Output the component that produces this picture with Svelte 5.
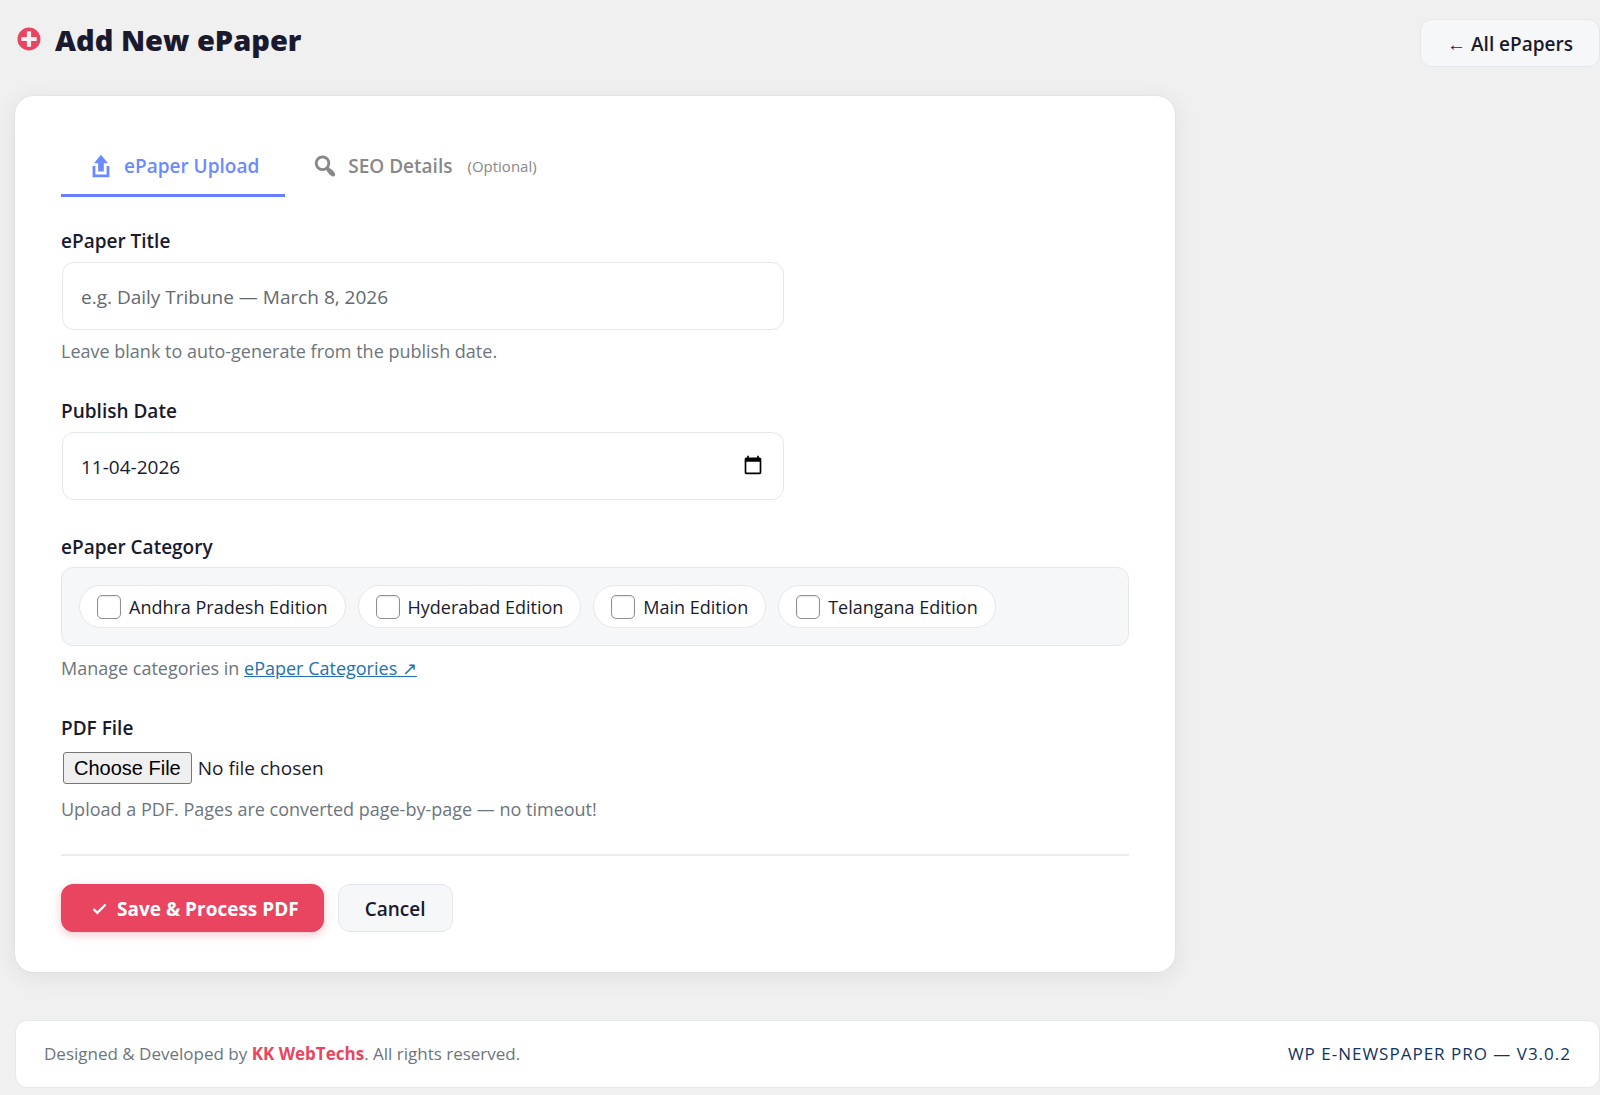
<script lang="ts">
  let activeTab = 'upload';
  let title = '';
  let publishDate = '11-04-2026';

  let categories = [
    { id: 'andhra', name: 'Andhra Pradesh Edition', checked: false },
    { id: 'hyderabad', name: 'Hyderabad Edition', checked: false },
    { id: 'main', name: 'Main Edition', checked: false },
    { id: 'telangana', name: 'Telangana Edition', checked: false }
  ];

  function reset(): void {
    title = '';
    categories = categories.map(c => ({ ...c, checked: false }));
  }
</script>

<div class="page">
  <header class="page-header">
    <h1>
      <svg class="icon brand" viewBox="0 0 20 20" aria-hidden="true">
        <path d="M15.8 4.2c3.2 3.21 3.2 8.39 0 11.6-3.21 3.2-8.39 3.2-11.6 0C1 12.59 1 7.41 4.2 4.2 7.41 1 12.59 1 15.8 4.2zm-4.3 11.3v-4h4v-3h-4v-4h-3v4h-4v3h4v4h3z" />
      </svg>
      Add New ePaper
    </h1>
    <a class="btn" href="#all">← All ePapers</a>
  </header>

  <main class="card">
    <div class="tabs" role="tablist">
      <button
        type="button"
        role="tab"
        class="tab"
        class:active={activeTab === 'upload'}
        aria-selected={activeTab === 'upload'}
        on:click={() => (activeTab = 'upload')}
      >
        <svg class="icon" viewBox="0 0 20 20" aria-hidden="true">
          <path d="M8 14V8H5l5-6 5 6h-3v6H8zm-2 2v-6H4v8h12.01v-8H14v6H6z" />
        </svg>
        ePaper Upload
      </button>
      <button
        type="button"
        role="tab"
        class="tab"
        class:active={activeTab === 'seo'}
        aria-selected={activeTab === 'seo'}
        on:click={() => (activeTab = 'seo')}
      >
        <svg class="icon" viewBox="0 0 20 20" aria-hidden="true">
          <path d="M12.14 4.18c1.87 1.87 2.11 4.75.72 6.89.12.1.22.21.36.31.2.16.47.36.81.59.34.24.56.39.66.47.42.31.73.57.94.78.32.32.6.65.84 1 .25.35.44.69.59 1.04.14.35.21.68.18 1-.02.32-.14.59-.36.81s-.49.34-.81.36c-.31.02-.65-.04-.99-.19-.35-.14-.7-.34-1.04-.59-.35-.24-.68-.52-1-.84-.21-.21-.47-.52-.77-.93-.1-.13-.25-.35-.47-.66-.22-.32-.4-.57-.56-.78-.16-.2-.29-.35-.44-.5-2.07 1.09-4.69.76-6.44-.98-2.14-2.15-2.14-5.64 0-7.78 2.15-2.15 5.63-2.15 7.78 0zm-1.41 6.36c1.36-1.37 1.36-3.58 0-4.95-1.37-1.37-3.59-1.37-4.95 0-1.37 1.37-1.37 3.58 0 4.95 1.36 1.37 3.58 1.37 4.95 0z" />
        </svg>
        SEO Details
        <span class="optional">(Optional)</span>
      </button>
    </div>

    <form on:submit|preventDefault>
      <div class="field">
        <label class="label" for="title">ePaper Title</label>
        <div class="control">
          <input id="title" type="text" placeholder="e.g. Daily Tribune — March 8, 2026" bind:value={title} />
        </div>
        <p class="help">Leave blank to auto-generate from the publish date.</p>
      </div>

      <div class="field">
        <label class="label" for="date">Publish Date</label>
        <div class="control">
          <input id="date" type="text" inputmode="numeric" bind:value={publishDate} />
          <button type="button" class="picker" aria-label="Show date picker">
            <svg viewBox="0 0 24 24" aria-hidden="true">
              <path d="M20 3h-1V1h-2v2H7V1H5v2H4c-1.1 0-2 .9-2 2v16c0 1.1.9 2 2 2h16c1.1 0 2-.9 2-2V5c0-1.1-.9-2-2-2zm0 18H4V8h16v13z" />
            </svg>
          </button>
        </div>
      </div>

      <fieldset class="field">
        <legend class="label">ePaper Category</legend>
        <div class="categories">
          {#each categories as category}
            <label class="pill">
              <input type="checkbox" name={category.id} bind:checked={category.checked} />
              {category.name}
            </label>
          {/each}
        </div>
        <p class="help">Manage categories in <a href="#categories">ePaper Categories ↗</a></p>
      </fieldset>

      <div class="field file">
        <label class="label" for="pdf">PDF File</label>
        <input id="pdf" type="file" accept="application/pdf" />
        <p class="help">Upload a PDF. Pages are converted page-by-page — no timeout!</p>
      </div>

      <div class="actions">
        <button type="submit" class="btn primary">
          <svg class="check" viewBox="0 0 20 20" aria-hidden="true">
            <path d="M15.3 5.3l-6.8 6.8-2.8-2.8-1.4 1.4 4.2 4.2 8.2-8.2" />
          </svg>
          Save &amp; Process PDF
        </button>
        <button type="button" class="btn" on:click={reset}>Cancel</button>
      </div>
    </form>
  </main>

  <footer>
    <p>Designed &amp; Developed by <a href="#kk">KK WebTechs</a>. All rights reserved.</p>
    <span class="version">WP E-Newspaper Pro — v3.0.2</span>
  </footer>
</div>

<style>
  :global(body) {
    background: #f0f0f0;
  }

  .page {
    padding: 19px 0 8px 15px;
    font-family: "Segoe UI", "Open Sans", "Noto Sans", sans-serif;
    font-size: 18px;
    line-height: 24px;
    color: #1a1a2e;
  }

  .page *,
  .page *::before {
    box-sizing: border-box;
  }

  .page-header {
    display: flex;
    align-items: center;
    justify-content: space-between;
    margin-bottom: 29px;
  }

  h1 {
    display: flex;
    align-items: center;
    gap: 12px;
    margin: 0;
    padding-bottom: 6px;
    font-size: 29px;
    line-height: 36px;
    font-weight: 800;
  }

  .icon {
    flex: none;
    width: 28px;
    height: 28px;
    fill: currentColor;
  }

  .brand {
    margin-bottom: 2px;
    color: #e94560;
  }

  .btn {
    display: inline-flex;
    align-items: center;
    height: 48px;
    padding: 2px 26px 0;
    border: 1px solid #e4e7eb;
    border-radius: 12px;
    background: #f6f7f9;
    color: #1a1a2e;
    font-family: inherit;
    font-size: 19px;
    font-weight: 600;
    text-decoration: none;
    cursor: pointer;
  }

  .primary {
    gap: 7px;
    padding-right: 24px;
    border-color: #e94560;
    background: #e94560;
    color: #fff;
    font-weight: 700;
    box-shadow: 0 3px 10px rgba(233, 69, 96, 0.3);
  }

  .check {
    width: 22px;
    height: 22px;
    fill: currentColor;
  }

  .card {
    max-width: 1160px;
    padding: 42px 46px 40px;
    border-radius: 18px;
    background: #fff;
    box-shadow: 0 0 1px rgba(0, 0, 0, 0.2), 0 4px 24px rgba(0, 0, 0, 0.08);
  }

  .tabs {
    display: flex;
    margin-bottom: 32px;
  }

  .tab {
    display: flex;
    align-items: center;
    gap: 9px;
    height: 59px;
    padding: 0 26px;
    border: 0;
    border-bottom: 3px solid transparent;
    background: none;
    color: #888;
    font-family: inherit;
    font-size: 19px;
    font-weight: 600;
    cursor: pointer;
  }

  .tab.active {
    border-color: #667eff;
    color: #6b8aff;
  }

  .optional {
    margin-left: 6px;
    font-size: 15px;
    font-weight: 400;
  }

  .field {
    margin: 0 0 35px;
    padding: 0;
    border: 0;
  }

  .field.file {
    margin-bottom: 32px;
  }

  .label {
    display: block;
    padding: 0;
    margin-bottom: 8px;
    font-size: 19px;
    font-weight: 600;
  }

  .control {
    position: relative;
    max-width: 724px;
    padding: 1px 1px 0;
  }

  input[type='text'] {
    display: block;
    width: 100%;
    height: 68px;
    padding: 1px 18px 0;
    border: 1px solid #e4e7eb;
    border-radius: 12px;
    background: #fff;
    color: #1a1a2e;
    font-family: inherit;
    font-size: 19px;
  }

  input::placeholder {
    color: #646970;
    opacity: 1;
  }

  .picker {
    position: absolute;
    top: 24px;
    right: 22px;
    width: 20px;
    height: 20px;
    padding: 0;
    border: 0;
    background: none;
    cursor: pointer;
  }

  .picker svg {
    display: block;
  }

  .help {
    margin: 8px 0 0;
    font-size: 18px;
    line-height: 26px;
    color: #6c757d;
  }

  .help a {
    color: #2271b1;
  }

  .categories {
    display: flex;
    flex-wrap: wrap;
    gap: 12px;
    margin-bottom: 9px;
    padding: 17px;
    border: 1px solid #e4e7eb;
    border-radius: 12px;
    background: #f6f7f9;
  }

  .pill {
    display: flex;
    align-items: center;
    gap: 8px;
    height: 43px;
    padding: 0 17px;
    border: 1px solid #e4e7eb;
    border-radius: 22px;
    background: #fff;
    font-size: 18px;
    cursor: pointer;
  }

  .pill input {
    appearance: none;
    width: 24px;
    height: 24px;
    margin: 0;
    border: 1px solid #8c8f94;
    border-radius: 5px;
    background: #fff;
    box-shadow: inset 0 1px 2px rgba(0, 0, 0, 0.1);
  }

  .pill input:checked {
    border-color: #e94560;
    background: #e94560;
  }

  input[type='file'] {
    display: block;
    height: 32px;
    margin: 12px 2px;
    font-family: inherit;
    font-size: 19px;
    color: #1a1a2e;
  }

  input::file-selector-button {
    height: 32px;
    margin-right: 6px;
    padding: 0 10px;
    border: 1px solid #767676;
    border-radius: 3px;
    background: #efefef;
    color: #000;
    font-family: Arial, "Liberation Sans", sans-serif;
    font-size: 20px;
  }

  .actions {
    display: flex;
    gap: 14px;
    padding-top: 28px;
    border-top: 2px solid #ececee;
  }

  footer {
    display: flex;
    align-items: center;
    justify-content: space-between;
    margin-top: 48px;
    padding: 21px 28px;
    border: 1px solid #e4e7eb;
    border-radius: 12px;
    background: #fff;
    font-size: 17px;
    color: #6c757d;
  }

  footer p {
    margin: 0;
  }

  footer a {
    color: #e94560;
    font-weight: 700;
    text-decoration: none;
  }

  .version {
    color: #0f3460;
    font-weight: 500;
    letter-spacing: 1px;
    text-transform: uppercase;
  }
</style>
